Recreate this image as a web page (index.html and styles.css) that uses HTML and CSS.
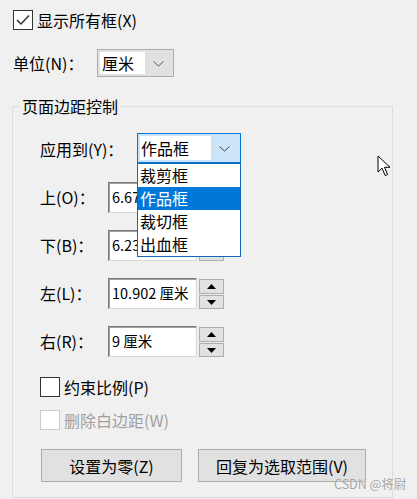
FILE: index.html
```html
<!DOCTYPE html>
<html lang="zh-CN">
<head>
<meta charset="utf-8">
<title>页面边距控制</title>
<link rel="stylesheet" href="styles.css">
</head>
<body>
<div class="dialog">
  <div class="check-row top-check">
    <span class="cb"><svg width="18" height="18" viewBox="0 0 18 18"><path d="M3 9 L7 13 L15 4.5" fill="none" stroke="#333" stroke-width="1.5"/></svg></span>
    <span>显示所有框(X)</span>
  </div>

  <div class="unit-row">
    <span class="unit-label">单位(N)：</span>
    <div class="combo combo-unit">
      <span class="combo-field">厘米</span>
      <span class="chev"><svg width="11" height="6" viewBox="0 0 11 6"><path d="M0.5 0.5 L5.5 5 L10.5 0.5" fill="none" stroke="#555" stroke-width="1"/></svg></span>
    </div>
  </div>

  <fieldset class="group">
    <legend>页面边距控制</legend>
    <div class="group-body">
      <div class="apply-row">
        <span class="apply-label">应用到(Y)：</span>
        <div class="combo combo-open">
          <span class="combo-field">作品框</span>
          <span class="chev"><svg width="11" height="6" viewBox="0 0 11 6"><path d="M0.5 0.5 L5.5 5 L10.5 0.5" fill="none" stroke="#444" stroke-width="1"/></svg></span>
          <ul class="dropdown">
            <li>裁剪框</li>
            <li class="sel">作品框</li>
            <li>裁切框</li>
            <li>出血框</li>
          </ul>
        </div>
      </div>

      <div class="rows">
        <div class="field-row">
          <span class="field-label">上(O)：</span>
          <div class="input">6.67</div>
          <div class="spin">
            <span class="spin-btn up"><svg width="9" height="5" viewBox="0 0 9 5"><path d="M0 5 L4.5 0 L9 5 Z" fill="#000"/></svg></span>
            <span class="spin-btn down"><svg width="9" height="5" viewBox="0 0 9 5"><path d="M0 0 L4.5 5 L9 0 Z" fill="#000"/></svg></span>
          </div>
        </div>
        <div class="field-row">
          <span class="field-label">下(B)：</span>
          <div class="input">6.23</div>
          <div class="spin">
            <span class="spin-btn up"><svg width="9" height="5" viewBox="0 0 9 5"><path d="M0 5 L4.5 0 L9 5 Z" fill="#000"/></svg></span>
            <span class="spin-btn down"><svg width="9" height="5" viewBox="0 0 9 5"><path d="M0 0 L4.5 5 L9 0 Z" fill="#000"/></svg></span>
          </div>
        </div>
        <div class="field-row">
          <span class="field-label">左(L)：</span>
          <div class="input">10.902 厘米</div>
          <div class="spin">
            <span class="spin-btn up"><svg width="9" height="5" viewBox="0 0 9 5"><path d="M0 5 L4.5 0 L9 5 Z" fill="#000"/></svg></span>
            <span class="spin-btn down"><svg width="9" height="5" viewBox="0 0 9 5"><path d="M0 0 L4.5 5 L9 0 Z" fill="#000"/></svg></span>
          </div>
        </div>
        <div class="field-row">
          <span class="field-label">右(R)：</span>
          <div class="input">9 厘米</div>
          <div class="spin">
            <span class="spin-btn up"><svg width="9" height="5" viewBox="0 0 9 5"><path d="M0 5 L4.5 0 L9 5 Z" fill="#000"/></svg></span>
            <span class="spin-btn down"><svg width="9" height="5" viewBox="0 0 9 5"><path d="M0 0 L4.5 5 L9 0 Z" fill="#000"/></svg></span>
          </div>
        </div>
      </div>

      <div class="check-row opt-check">
        <span class="cb"></span>
        <span>约束比例(P)</span>
      </div>
      <div class="check-row opt-check disabled">
        <span class="cb"></span>
        <span>删除白边距(W)</span>
      </div>

      <div class="btn-row">
        <span class="btn btn-zero">设置为零(Z)</span>
        <span class="btn btn-restore">回复为选取范围(V)</span>
      </div>
    </div>
  </fieldset>

  <div class="watermark">CSDN @将尉</div>
  <svg class="cursor" width="16" height="22" viewBox="0 0 16 22"><path d="M1 1 L1 17 L5 13.2 L8.2 20.5 L10.6 19.5 L7.5 12.3 L13 12.3 Z" fill="#fff" stroke="#000" stroke-width="1" stroke-linejoin="miter"/></svg>
</div>
</body>
</html>
```

FILE: styles.css
```css
* {
  box-sizing: border-box;
}

html, body {
  margin: 0;
  padding: 0;
}

body {
  width: 417px;
  height: 499px;
  overflow: hidden;
  background: #f0f0f0;
  color: #000;
  font-family: "Noto Sans CJK SC", "Microsoft YaHei", sans-serif;
  font-size: 16px;
  line-height: 20px;
}

.dialog {
  position: relative;
  height: 499px;
  padding: 10px 0 0 12px;
}

.check-row {
  display: flex;
  align-items: center;
  gap: 4px;
  height: 20px;
}

.top-check {
  margin-left: 1px;
}

.cb {
  width: 20px;
  height: 20px;
  border: 1px solid #333;
  background: #fff;
  display: flex;
  align-items: center;
  justify-content: center;
  flex: none;
}

.unit-row {
  display: flex;
  align-items: center;
  height: 28px;
  margin: 19px 0 0 1px;
}

.unit-label {
  width: 84px;
}

.combo {
  position: relative;
  display: flex;
  padding: 2px;
  border: 1px solid #adadad;
  background: #e1e1e1;
}

.combo-unit {
  width: 77px;
  height: 28px;
}

.combo-field {
  display: flex;
  align-items: center;
  background: #fff;
  padding-left: 2px;
}

.combo-unit .combo-field {
  width: 45px;
}

.chev {
  flex: 1;
  display: flex;
  align-items: center;
  justify-content: center;
  padding-top: 1px;
}

.group {
  width: 381px;
  margin: 19px 0 0 0;
  padding: 0 0 0 6px;
  border: 1px solid #dcdcdc;
}

.group legend {
  padding: 0 3px;
  line-height: 20px;
}

.group-body {
  padding: 17px 0 15px 21px;
}

.apply-row {
  display: flex;
  align-items: center;
  height: 30px;
}

.apply-label {
  width: 97px;
  padding-top: 2px;
}

.combo-open {
  width: 104px;
  height: 30px;
  border-color: #0078d7;
  background: #cce4f7;
  z-index: 2;
}

.combo-open .combo-field {
  width: 71px;
  padding-left: 1px;
}

.dropdown {
  position: absolute;
  top: calc(100% + 1px);
  left: -1px;
  width: 104px;
  margin: 0;
  padding: 0;
  list-style: none;
  background: #fff;
  border: 1px solid #1467b8;
}

.dropdown li {
  height: 23px;
  line-height: 23px;
  padding-left: 2px;
}

.dropdown li.sel {
  background: #0078d7;
  color: #fff;
}

.rows {
  display: flex;
  flex-direction: column;
  gap: 17px;
  margin-top: 19px;
}

.field-row {
  display: flex;
  align-items: flex-start;
  height: 31px;
}

.field-label {
  width: 68px;
  line-height: 31px;
}

.input {
  width: 89px;
  height: 31px;
  background: #fff;
  border: 1px solid #d6d6d6;
  border-top-color: #7a7a7a;
  border-left-color: #7a7a7a;
  box-shadow: inset 1px 1px 0 #a0a0a0;
  padding-left: 3px;
  font-size: 14.5px;
  line-height: 27px;
  white-space: nowrap;
  overflow: hidden;
}

.spin {
  display: flex;
  flex-direction: column;
  gap: 1px;
  margin: 1px 0 0 2px;
}

.spin-btn {
  width: 25px;
  display: flex;
  align-items: center;
  justify-content: center;
  background: #e1e1e1;
  border: 1px solid #adadad;
}

.spin-btn.up {
  height: 15px;
}

.spin-btn.down {
  height: 14px;
}

.opt-check {
  margin-top: 20px;
}

.opt-check + .opt-check {
  margin-top: 13px;
}

.disabled {
  color: #a0a0a0;
}

.disabled .cb {
  border-color: #cccccc;
}

.btn-row {
  display: flex;
  gap: 16px;
  margin: 19px 0 0 1px;
}

.btn {
  display: flex;
  align-items: center;
  justify-content: center;
  height: 33px;
  background: #e1e1e1;
  border: 1px solid #adadad;
}

.btn-zero {
  width: 141px;
}

.btn-restore {
  width: 168px;
}

.watermark {
  position: absolute;
  left: 334px;
  top: 476px;
  font-size: 12.5px;
  line-height: 16px;
  color: #a3a3a3;
  text-shadow: 0 0 1px #ffffff;
  white-space: nowrap;
}

.cursor {
  position: absolute;
  left: 377px;
  top: 155px;
}
```
